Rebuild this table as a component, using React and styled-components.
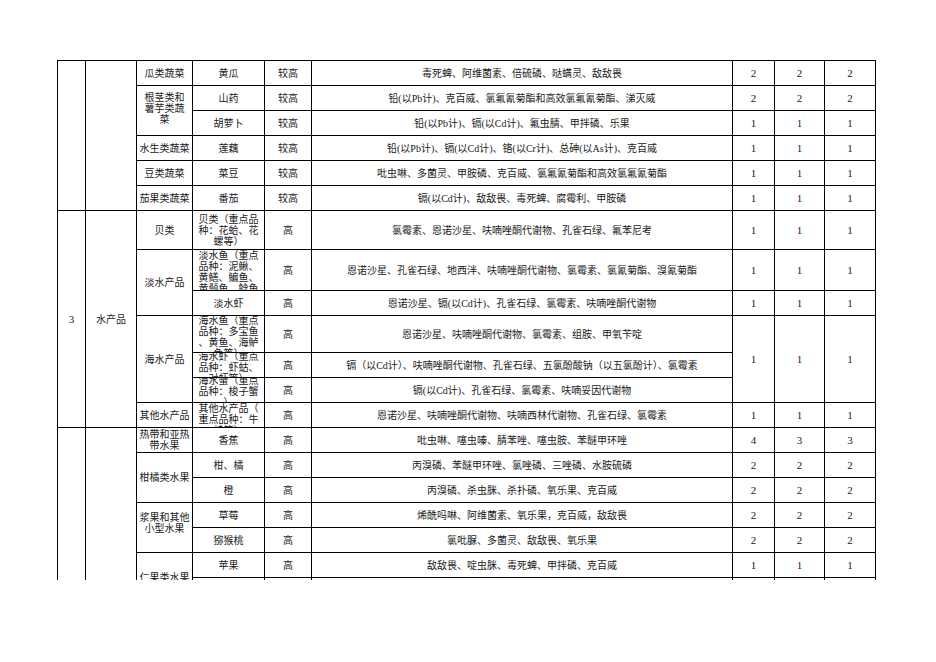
import React from "react";
import styled, { createGlobalStyle } from "styled-components";

const GlobalStyle = createGlobalStyle`
  body {
    margin: 0;
    background: #fff;
    font-family: "Liberation Serif", "Noto Sans CJK SC", serif;
  }
`;

// one entry per sheet row, only the cells that start in that row
const rows = [
  [
    { rows: 6 }, { rows: 6 },
    { text: "瓜类蔬菜" }, { text: "黄瓜" }, { text: "较高" },
    { text: "毒死蜱、阿维菌素、倍硫磷、哒螨灵、敌敌畏" },
    { num: "2" }, { num: "2" }, { num: "2" },
  ],
  [
    { lines: ["根茎类和", "薯芋类蔬", "菜"], rows: 2, shift: -4 },
    { text: "山药" }, { text: "较高" },
    { text: "铅(以Pb计)、克百威、氯氟氰菊酯和高效氯氟氰菊酯、涕灭威" },
    { num: "2" }, { num: "2" }, { num: "2" },
  ],
  [
    { text: "胡萝卜" }, { text: "较高" },
    { text: "铅(以Pb计)、镉(以Cd计)、氟虫腈、甲拌磷、乐果" },
    { num: "1" }, { num: "1" }, { num: "1" },
  ],
  [
    { text: "水生类蔬菜" }, { text: "莲藕" }, { text: "较高" },
    { text: "铅(以Pb计)、镉(以Cd计)、铬(以Cr计)、总砷(以As计)、克百威" },
    { num: "1" }, { num: "1" }, { num: "1" },
  ],
  [
    { text: "豆类蔬菜" }, { text: "菜豆" }, { text: "较高" },
    { text: "吡虫啉、多菌灵、甲胺磷、克百威、氯氟氰菊酯和高效氯氟氰菊酯" },
    { num: "1" }, { num: "1" }, { num: "1" },
  ],
  [
    { text: "茄果类蔬菜" }, { text: "番茄" }, { text: "较高" },
    { text: "镉(以Cd计)、敌敌畏、毒死蜱、腐霉利、甲胺磷" },
    { num: "1" }, { num: "1" }, { num: "1" },
  ],
  [
    { num: "3", rows: 7 }, { text: "水产品", rows: 7 },
    { text: "贝类" },
    { lines: ["贝类（重点品", "种：花蛤、花", "螺等）"] },
    { text: "高" },
    { text: "氯霉素、恩诺沙星、呋喃唑酮代谢物、孔雀石绿、氟苯尼考" },
    { num: "1" }, { num: "1" }, { num: "1" },
  ],
  [
    { text: "淡水产品", rows: 2 },
    { lines: ["淡水鱼（重点", "品种：泥鳅、", "黄鳝、鳊鱼、", "黄颡鱼、鲶鱼", "等）"], top: true },
    { text: "高" },
    { text: "恩诺沙星、孔雀石绿、地西泮、呋喃唑酮代谢物、氯霉素、氯氰菊酯、溴氰菊酯" },
    { num: "1" }, { num: "1" }, { num: "1" },
  ],
  [
    { text: "淡水虾" }, { text: "高" },
    { text: "恩诺沙星、镉(以Cd计)、孔雀石绿、氯霉素、呋喃唑酮代谢物" },
    { num: "1" }, { num: "1" }, { num: "1" },
  ],
  [
    { text: "海水产品", rows: 3 },
    { lines: ["海水鱼（重点", "品种：多宝鱼", "、黄鱼、海鲈", "鱼等）"], top: true, shift: -1 },
    { text: "高" },
    { text: "恩诺沙星、呋喃唑酮代谢物、氯霉素、组胺、甲氧苄啶" },
    { num: "1", rows: 3 }, { num: "1", rows: 3 }, { num: "1", rows: 3 },
  ],
  [
    { lines: ["海水虾（重点", "品种：虾蛄、", "对虾等）"], top: true, shift: -2 },
    { text: "高" },
    { text: "镉（以Cd计）、呋喃唑酮代谢物、孔雀石绿、五氯酚酸钠（以五氯酚计）、氯霉素" },
  ],
  [
    { lines: ["海水蟹（重点", "品种：梭子蟹", "）"], top: true, shift: -3 },
    { text: "高" },
    { text: "镉(以Cd计)、孔雀石绿、氯霉素、呋喃妥因代谢物" },
  ],
  [
    { text: "其他水产品" },
    { lines: ["其他水产品（", "重点品种：牛", "蛙等）"], top: true },
    { text: "高" },
    { text: "恩诺沙星、呋喃唑酮代谢物、呋喃西林代谢物、孔雀石绿、氯霉素" },
    { num: "1" }, { num: "1" }, { num: "1" },
  ],
  [
    { rows: 7 }, { rows: 7 },
    { lines: ["热带和亚热", "带水果"] },
    { text: "香蕉" }, { text: "高" },
    { text: "吡虫啉、噻虫嗪、腈苯唑、噻虫胺、苯醚甲环唑" },
    { num: "4" }, { num: "3" }, { num: "3" },
  ],
  [
    { text: "柑橘类水果", rows: 2 },
    { text: "柑、橘" }, { text: "高" },
    { text: "丙溴磷、苯醚甲环唑、氯唑磷、三唑磷、水胺硫磷" },
    { num: "2" }, { num: "2" }, { num: "2" },
  ],
  [
    { text: "橙" }, { text: "高" },
    { text: "丙溴磷、杀虫脒、杀扑磷、氧乐果、克百威" },
    { num: "2" }, { num: "2" }, { num: "2" },
  ],
  [
    { lines: ["浆果和其他", "小型水果"], rows: 2, shift: -10 },
    { text: "草莓" }, { text: "高" },
    { text: "烯酰吗啉、阿维菌素、氧乐果，克百威，敌敌畏" },
    { num: "2" }, { num: "2" }, { num: "2" },
  ],
  [
    { text: "猕猴桃" }, { text: "高" },
    { text: "氯吡脲、多菌灵、敌敌畏、氧乐果" },
    { num: "2" }, { num: "2" }, { num: "2" },
  ],
  [
    { text: "仁果类水果", rows: 2 },
    { text: "苹果" }, { text: "高" },
    { text: "敌敌畏、啶虫脒、毒死蜱、甲拌磷、克百威" },
    { num: "1" }, { num: "1" }, { num: "1" },
  ],
  // next row is cut off by the frame
  [{}, {}, {}, {}, {}, {}],
];

const App = () => {
  return (
    <>
      <GlobalStyle />
      <Page>
        <Frame>
          <Sheet>
            {rows.map((row, r) =>
              row.map((c, i) => (
                <Cell key={`${r}-${i}`} $rows={c.rows} $top={c.top} $num={!!c.num}>
                  {c.lines ? (
                    <Lines $shift={c.shift}>
                      {c.lines.map((l) => (
                        <Line key={l}>{l}</Line>
                      ))}
                    </Lines>
                  ) : (
                    c.text || c.num || null
                  )}
                </Cell>
              ))
            )}
          </Sheet>
        </Frame>
      </Page>
    </>
  );
};

// --- STYLES ---

const Page = styled.div`
  padding: 60px 0 0 57px;
`;

const Frame = styled.div`
  width: max-content;
  height: 520px;
  overflow: hidden;
`;

const Sheet = styled.div`
  display: grid;
  grid-template-columns: 28px 51px 56px 72px 47px 421px 42px 50px 51px;
  grid-template-rows: repeat(6, 25px) 39px 41px 25px 37px repeat(10, 25px);
  border-top: 1px solid #000;
  border-left: 1px solid #000;
  width: max-content;
`;

const Cell = styled.div`
  grid-row: span ${(p) => p.$rows || 1};
  box-sizing: border-box;
  border-right: 1px solid #000;
  border-bottom: 1px solid #000;
  display: flex;
  flex-direction: column;
  justify-content: ${(p) => (p.$top ? "flex-start" : "center")};
  align-items: center;
  overflow: hidden;
  white-space: nowrap;
  text-align: center;
  color: #1a1a1a;
  font-size: ${(p) => (p.$num ? "11px" : "10px")};
  line-height: 11px;
`;

const Lines = styled.div`
  display: flex;
  flex-direction: column;
  align-items: center;
  margin-top: ${(p) => p.$shift || 0}px;
`;

const Line = styled.span`
  display: block;
  height: 11px;
`;

export default App;
